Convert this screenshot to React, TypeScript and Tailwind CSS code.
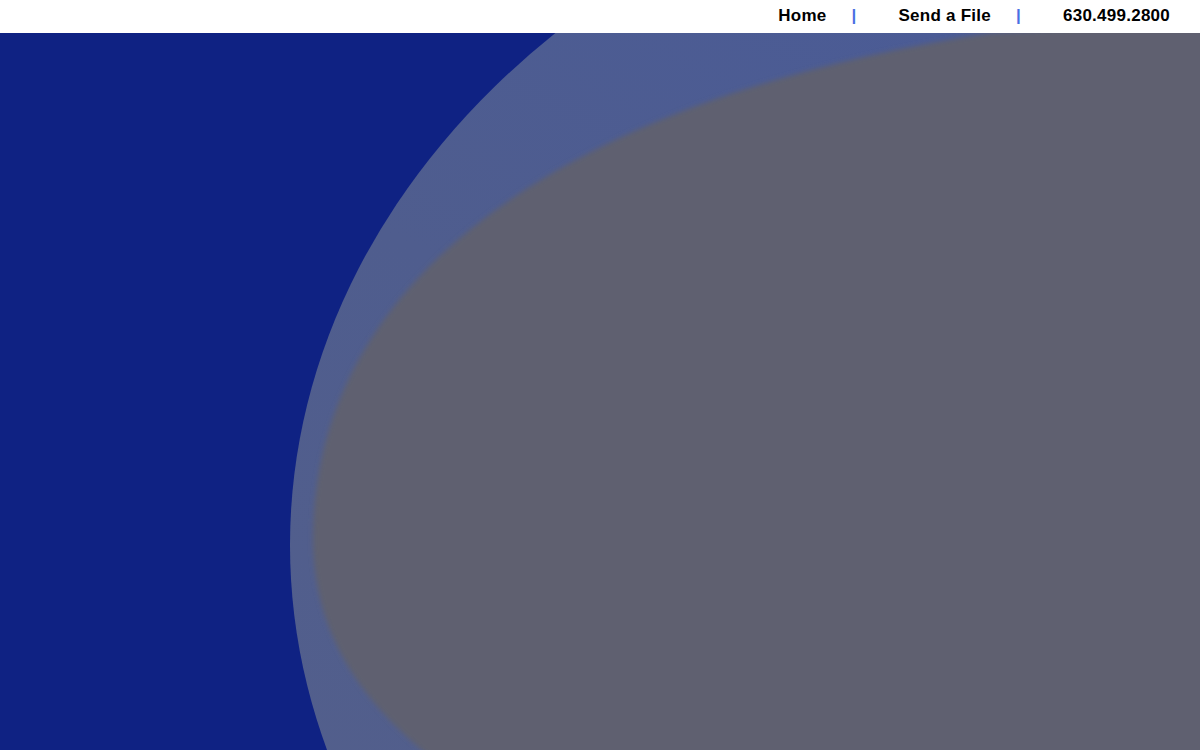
import React from 'react';

const links = ['Home', 'Send a File', '630.499.2800'];

function Header() {
  return (
    <header className="h-[33px] bg-white flex items-center justify-end pr-[30px] pb-[2px] font-['Liberation_Sans',Arial,sans-serif] text-[17px] font-bold tracking-[0.25px] text-black">
      {links.map((label, i) => (
        <React.Fragment key={label}>
          {i > 0 && <span className="ml-[25px] mr-[42px] text-[#4a6fe3]">|</span>}
          <a href="#" className="leading-none">
            {label}
          </a>
        </React.Fragment>
      ))}
    </header>
  );
}

function HeroShapes() {
  return (
    <svg
      className="absolute inset-0 w-full h-full"
      viewBox="0 33 1200 717"
      preserveAspectRatio="none"
    >
      <defs>
        <linearGradient id="band" x1="0" y1="1" x2="0.6" y2="0">
          <stop offset="0" stopColor="#55608a" />
          <stop offset="0.55" stopColor="#4f5d8e" />
          <stop offset="0.85" stopColor="#4a5b97" />
          <stop offset="1" stopColor="#556184" />
        </linearGradient>
        <filter id="soft" x="-5%" y="-5%" width="110%" height="110%">
          <feGaussianBlur stdDeviation="2.5" />
        </filter>
      </defs>
      <ellipse cx="1190" cy="545" rx="900" ry="722" fill="url(#band)" />
      <path
        d="M 990 33 C 560 100, 310 280, 313 545 C 316 645, 370 710, 440 765 L 1210 765 L 1210 20 Z"
        fill="#5f6070"
        filter="url(#soft)"
      />
    </svg>
  );
}

export default function App() {
  return (
    <div className="w-full min-h-screen bg-white">
      <Header />
      <section className="relative h-[717px] bg-[#0f2283] overflow-hidden">
        <HeroShapes />
      </section>
    </div>
  );
}
